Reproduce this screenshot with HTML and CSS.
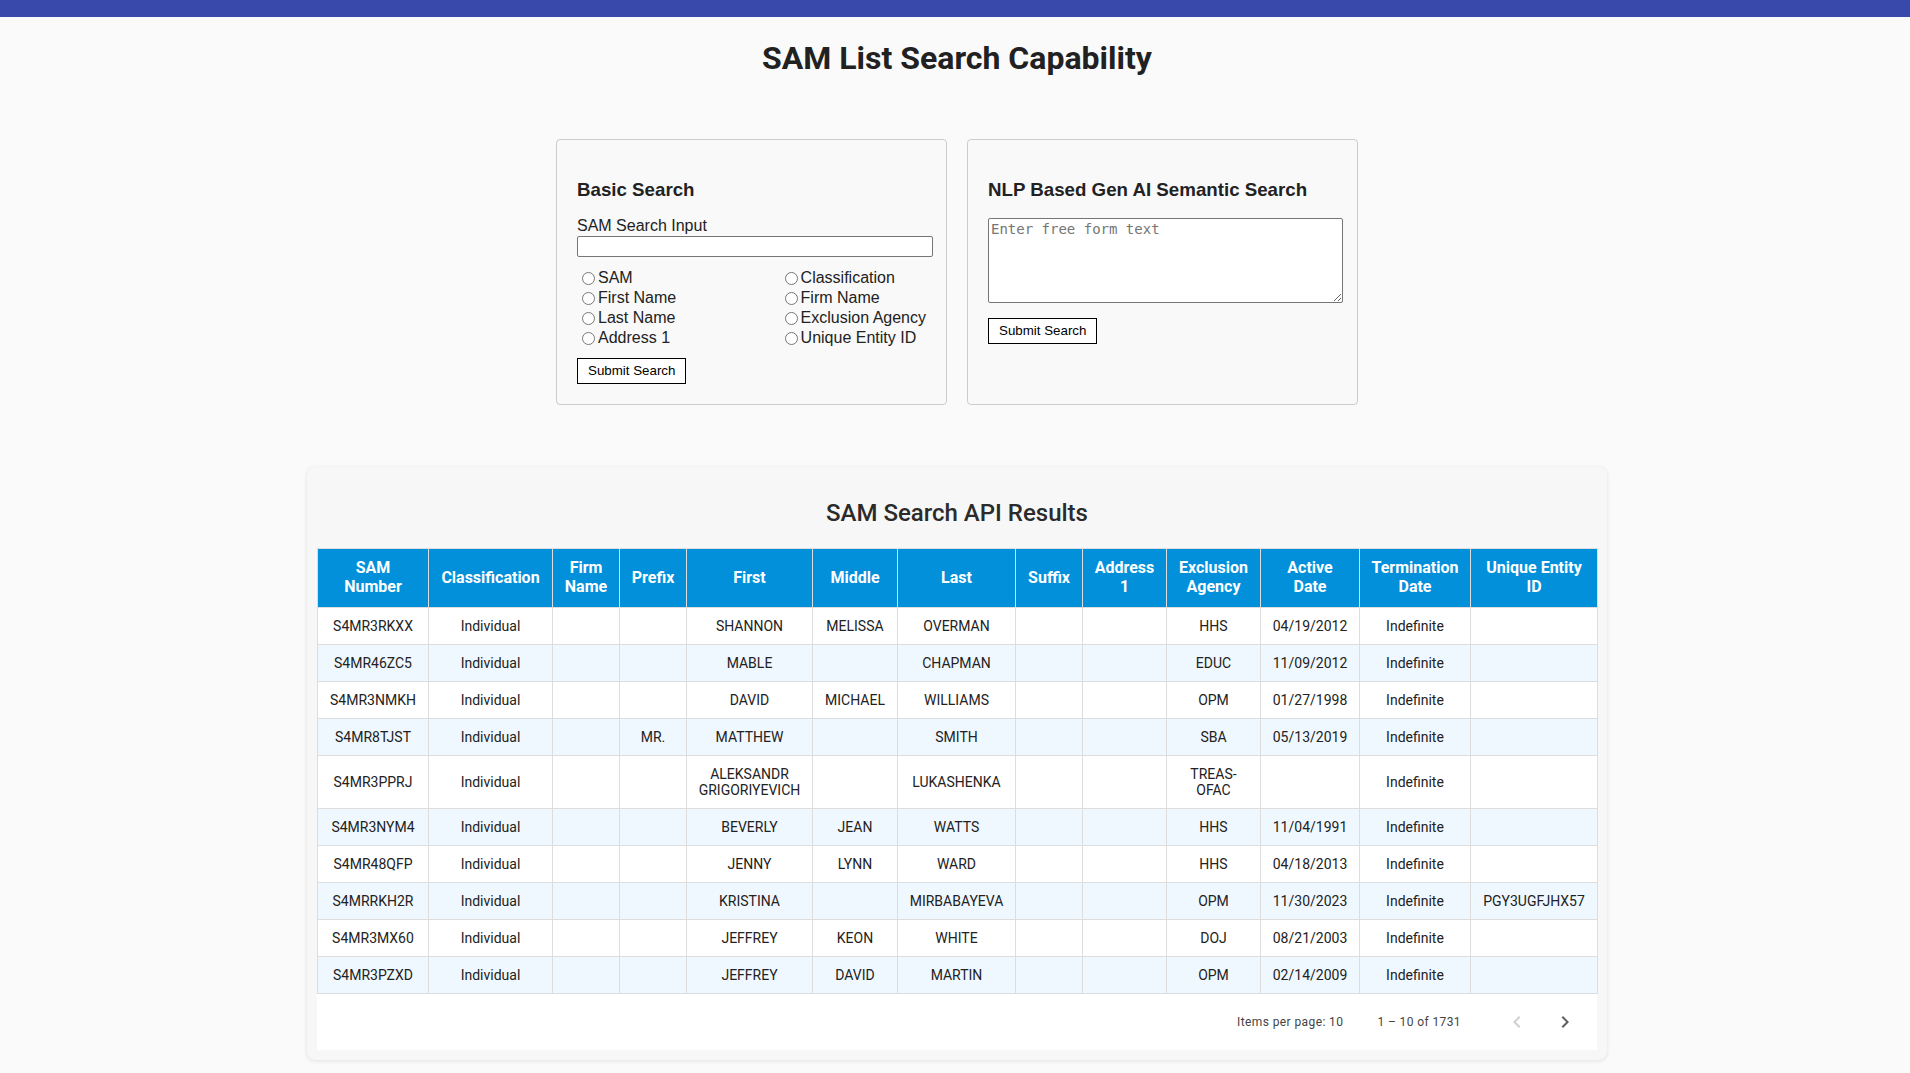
FILE: index.html
```html
<!DOCTYPE html>
<html lang="en">
<head>
<meta charset="utf-8">
<title>SAM List Search Capability</title>
<link rel="stylesheet" href="styles.css">
</head>
<body>
<header class="topbar"></header>
<main class="page">
  <h1 class="page-title">SAM List Search Capability</h1>

  <section class="search-row">
    <div class="search-card">
      <h3 class="card-title">Basic Search</h3>
      <label class="field-label" for="sam-input">SAM Search Input</label>
      <input class="text-input" id="sam-input" type="text">
      <div class="options">
        <div class="option-col">
          <label class="option"><input type="radio" name="field">SAM</label>
          <label class="option"><input type="radio" name="field">First Name</label>
          <label class="option"><input type="radio" name="field">Last Name</label>
          <label class="option"><input type="radio" name="field">Address 1</label>
        </div>
        <div class="option-col">
          <label class="option"><input type="radio" name="field">Classification</label>
          <label class="option"><input type="radio" name="field">Firm Name</label>
          <label class="option"><input type="radio" name="field">Exclusion Agency</label>
          <label class="option"><input type="radio" name="field">Unique Entity ID</label>
        </div>
      </div>
      <button class="submit-btn" type="button">Submit Search</button>
    </div>

    <div class="search-card">
      <h3 class="card-title">NLP Based Gen AI Semantic Search</h3>
      <textarea class="free-text" placeholder="Enter free form text"></textarea>
      <button class="submit-btn submit-nlp" type="button">Submit Search</button>
    </div>
  </section>

  <section class="results-card">
    <h2 class="results-title">SAM Search API Results</h2>
    <div class="table-wrap">
      <table class="results-table">
        <colgroup>
          <col class="c1"><col class="c2"><col class="c3"><col class="c4"><col class="c5"><col class="c6"><col class="c7"><col class="c8"><col class="c9"><col class="c10"><col class="c11"><col class="c12"><col class="c13">
        </colgroup>
        <thead>
          <tr>
            <th>SAM<br>Number</th>
            <th>Classification</th>
            <th>Firm<br>Name</th>
            <th>Prefix</th>
            <th>First</th>
            <th>Middle</th>
            <th>Last</th>
            <th>Suffix</th>
            <th>Address<br>1</th>
            <th>Exclusion<br>Agency</th>
            <th>Active<br>Date</th>
            <th>Termination<br>Date</th>
            <th>Unique Entity<br>ID</th>
          </tr>
        </thead>
        <tbody>
          <tr><td>S4MR3RKXX</td><td>Individual</td><td></td><td></td><td>SHANNON</td><td>MELISSA</td><td>OVERMAN</td><td></td><td></td><td>HHS</td><td>04/19/2012</td><td>Indefinite</td><td></td></tr>
          <tr><td>S4MR46ZC5</td><td>Individual</td><td></td><td></td><td>MABLE</td><td></td><td>CHAPMAN</td><td></td><td></td><td>EDUC</td><td>11/09/2012</td><td>Indefinite</td><td></td></tr>
          <tr><td>S4MR3NMKH</td><td>Individual</td><td></td><td></td><td>DAVID</td><td>MICHAEL</td><td>WILLIAMS</td><td></td><td></td><td>OPM</td><td>01/27/1998</td><td>Indefinite</td><td></td></tr>
          <tr><td>S4MR8TJST</td><td>Individual</td><td></td><td>MR.</td><td>MATTHEW</td><td></td><td>SMITH</td><td></td><td></td><td>SBA</td><td>05/13/2019</td><td>Indefinite</td><td></td></tr>
          <tr><td>S4MR3PPRJ</td><td>Individual</td><td></td><td></td><td>ALEKSANDR<br>GRIGORIYEVICH</td><td></td><td>LUKASHENKA</td><td></td><td></td><td>TREAS-<br>OFAC</td><td></td><td>Indefinite</td><td></td></tr>
          <tr><td>S4MR3NYM4</td><td>Individual</td><td></td><td></td><td>BEVERLY</td><td>JEAN</td><td>WATTS</td><td></td><td></td><td>HHS</td><td>11/04/1991</td><td>Indefinite</td><td></td></tr>
          <tr><td>S4MR48QFP</td><td>Individual</td><td></td><td></td><td>JENNY</td><td>LYNN</td><td>WARD</td><td></td><td></td><td>HHS</td><td>04/18/2013</td><td>Indefinite</td><td></td></tr>
          <tr><td>S4MRRKH2R</td><td>Individual</td><td></td><td></td><td>KRISTINA</td><td></td><td>MIRBABAYEVA</td><td></td><td></td><td>OPM</td><td>11/30/2023</td><td>Indefinite</td><td>PGY3UGFJHX57</td></tr>
          <tr><td>S4MR3MX60</td><td>Individual</td><td></td><td></td><td>JEFFREY</td><td>KEON</td><td>WHITE</td><td></td><td></td><td>DOJ</td><td>08/21/2003</td><td>Indefinite</td><td></td></tr>
          <tr><td>S4MR3PZXD</td><td>Individual</td><td></td><td></td><td>JEFFREY</td><td>DAVID</td><td>MARTIN</td><td></td><td></td><td>OPM</td><td>02/14/2009</td><td>Indefinite</td><td></td></tr>
        </tbody>
      </table>
      <div class="paginator">
        <span class="page-size">Items per page: 10</span>
        <span class="range-label">1 – 10 of 1731</span>
        <button class="page-btn page-prev" type="button" aria-label="Previous page">
          <svg viewBox="0 0 24 24" width="24" height="24"><path d="M15.41 7.41L14 6l-6 6 6 6 1.41-1.41L10.83 12z"/></svg>
        </button>
        <button class="page-btn page-next" type="button" aria-label="Next page">
          <svg viewBox="0 0 24 24" width="24" height="24"><path d="M10 6L8.59 7.41 13.17 12l-4.58 4.59L10 18l6-6z"/></svg>
        </button>
      </div>
    </div>
  </section>
</main>
</body>
</html>
```

FILE: styles.css
```css
body {
  margin: 0;
  background: #fafafa;
  font-family: Roboto, "Liberation Sans", Arial, sans-serif;
  color: #212121;
}

.topbar {
  height: 17px;
  background: #3949ab;
}

.page {
  padding: 0 0 40px 4px;
}

.page-title {
  margin: 21.5px 0 0;
  font-size: 32px;
  font-weight: 700;
  line-height: 38px;
  text-align: center;
  color: #212121;
}

/* search cards */
.search-row {
  display: flex;
  justify-content: center;
  gap: 20px;
  margin-top: 62.5px;
}

.search-card {
  box-sizing: border-box;
  width: 391px;
  padding: 0 20px 20px;
  border: 1px solid #cccccc;
  border-radius: 4px;
  background: #f9f9f9;
  font-family: "Liberation Sans", Arial, Helvetica, sans-serif;
  color: #222;
}

.card-title {
  margin: 38.7px 0 18px;
  font-size: 18.72px;
  font-weight: 700;
  line-height: 21.5px;
  color: #222;
}

.field-label {
  display: block;
  margin-top: -1px;
  font-size: 16px;
  line-height: 18px;
}

.text-input {
  display: block;
  box-sizing: border-box;
  width: calc(100% + 7px);
  height: 21px;
  margin: 1px 0 0;
  padding: 1px 2px;
  border: 1px solid #767676;
  border-radius: 2px;
  background: #fff;
  font: 13.33px "Liberation Sans", Arial, sans-serif;
}

.options {
  display: flex;
  justify-content: space-between;
  margin-top: 11px;
}

.option-col {
  display: flex;
  flex-direction: column;
}

.option {
  display: flex;
  align-items: center;
  height: 20px;
  font-size: 16px;
  line-height: 20px;
}

.option input {
  width: 13px;
  height: 13px;
  margin: 1px 3px 0 5px;
}

.submit-btn {
  display: block;
  margin-top: 10px;
  padding: 4px 10px;
  border: 1px solid #000;
  border-radius: 0;
  background: #fff;
  color: #000;
  font: 13.33px/16px "Liberation Sans", Arial, sans-serif;
}

.free-text {
  display: block;
  box-sizing: border-box;
  width: calc(100% + 6px);
  height: 85px;
  margin: 0;
  padding: 2px;
  border: 1px solid #767676;
  border-radius: 2px;
  background: #fff;
  font: 14px/16px "DejaVu Sans Mono", "Liberation Mono", monospace;
  resize: both;
}

.free-text::placeholder {
  color: #757575;
}

.submit-nlp {
  margin-top: 15px;
}

/* results */
.results-card {
  box-sizing: border-box;
  width: 1300px;
  margin: 62px auto 0;
  padding: 10px;
  border-radius: 8px;
  background: #f7f7f7;
  box-shadow: 0 1px 4px rgba(0, 0, 0, 0.1), 0 0 1px rgba(0, 0, 0, 0.06);
}

.results-title {
  margin: 22px 0 21px;
  font-size: 24px;
  font-weight: 500;
  line-height: 28px;
  text-align: center;
  color: #2b2b2b;
}

.table-wrap {
  background: #fff;
}

.results-table {
  width: 100%;
  border-collapse: collapse;
  table-layout: fixed;
}

.c1 { width: 111px; }
.c2 { width: 124px; }
.c3 { width: 67px; }
.c4 { width: 67px; }
.c5 { width: 126px; }
.c6 { width: 85px; }
.c7 { width: 118px; }
.c8 { width: 67px; }
.c9 { width: 84px; }
.c10 { width: 94px; }
.c11 { width: 99px; }
.c12 { width: 111px; }
.c13 { width: 127px; }

.results-table th {
  padding: 10px 4px;
  border: 1px solid #dddddd;
  background: #0290db;
  color: #fff;
  font-size: 16px;
  font-weight: 700;
  line-height: 18.75px;
  text-align: center;
  vertical-align: middle;
  white-space: nowrap;
}

.results-table td {
  padding: 10px 4px;
  border: 1px solid #dddddd;
  color: #222;
  font-size: 14px;
  line-height: 16px;
  text-align: center;
  vertical-align: middle;
  white-space: nowrap;
}

.results-table tbody tr:nth-child(even) td {
  background: #f0f8ff;
}

.paginator {
  display: flex;
  justify-content: flex-end;
  align-items: center;
  height: 56px;
  padding: 0 8px;
  font-size: 12px;
  letter-spacing: 0.4px;
  color: #444;
}

.range-label {
  margin: 0 32px 0 34px;
}

.page-btn {
  display: flex;
  align-items: center;
  justify-content: center;
  width: 48px;
  height: 48px;
  padding: 0;
  border: 0;
  background: none;
}

.page-prev svg {
  fill: #d0d0d0;
}

.page-next svg {
  fill: #5f5f5f;
}
```
